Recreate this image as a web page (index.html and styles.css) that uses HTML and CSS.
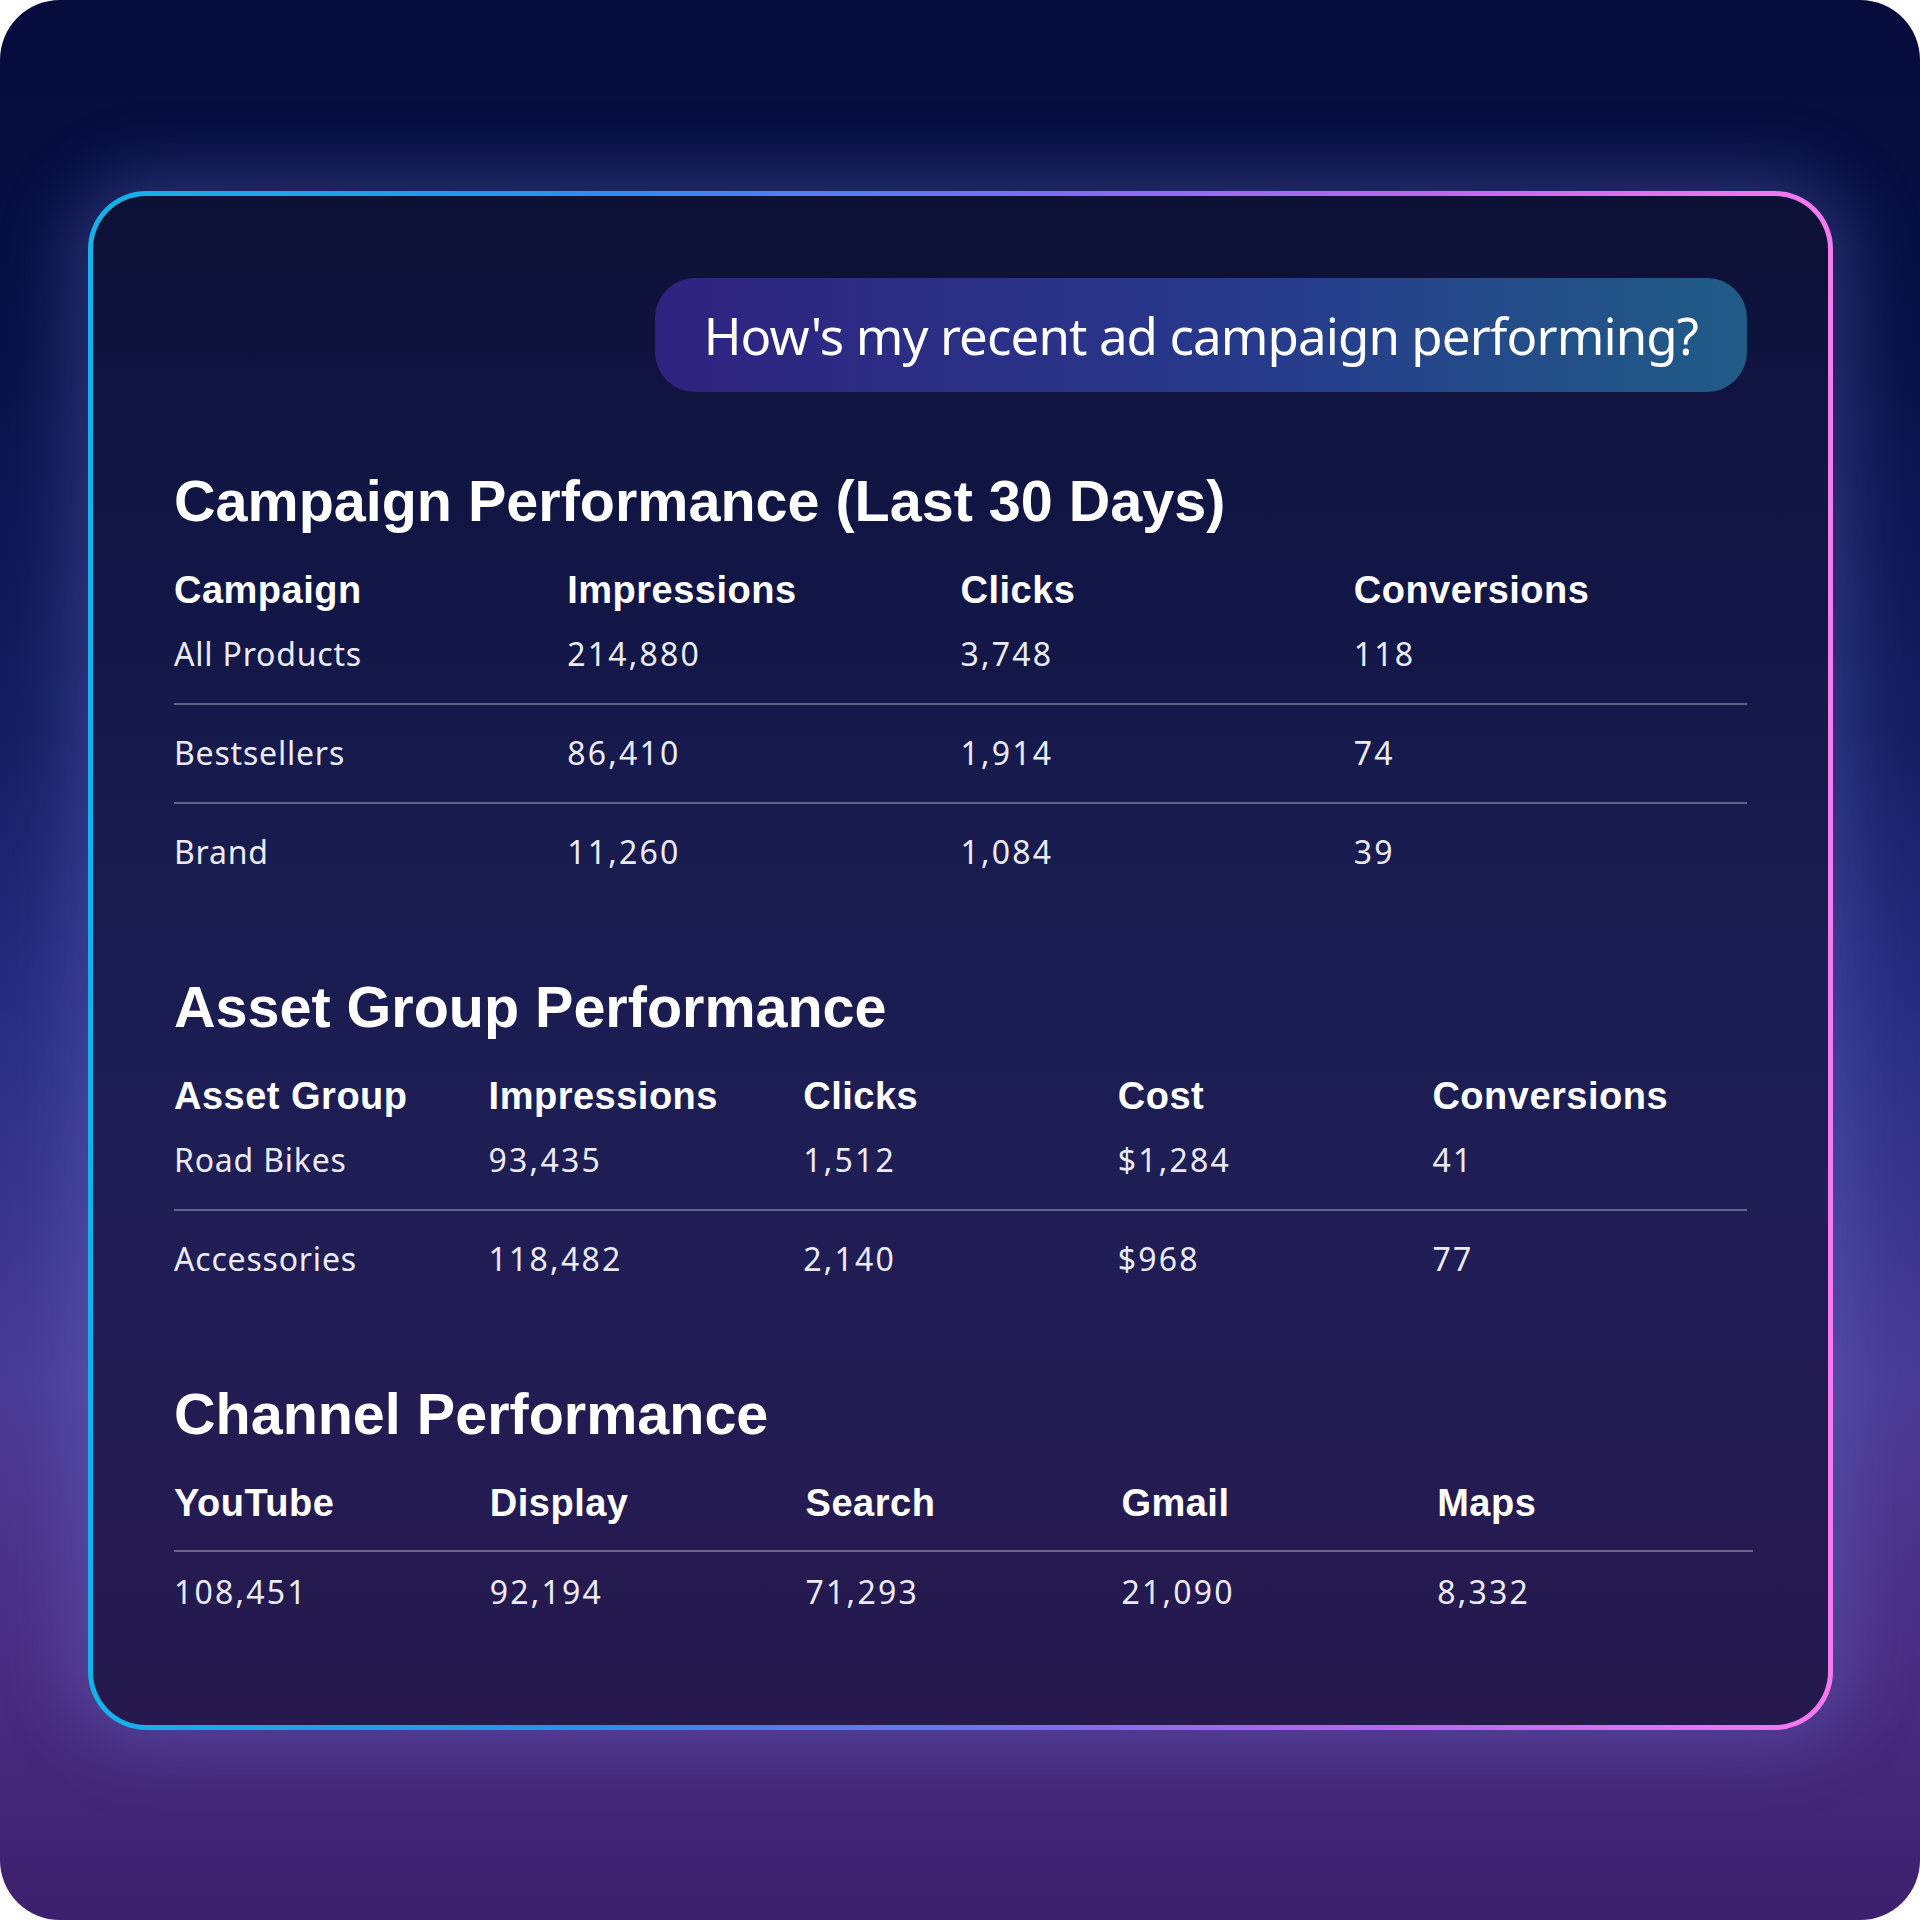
FILE: index.html
```html
<!DOCTYPE html>
<html lang="en">
<head>
<meta charset="utf-8">
<title>Campaign Performance</title>
<link rel="stylesheet" href="styles.css">
</head>
<body>
<div class="page">
  <div class="card">
    <div class="bubble">How's my recent ad campaign performing?</div>

    <section class="section first">
      <h2 class="title">Campaign Performance (Last 30 Days)</h2>
      <div class="table cols4">
        <div class="row head"><span>Campaign</span><span>Impressions</span><span>Clicks</span><span>Conversions</span></div>
        <div class="row data"><span>All Products</span><span class="num">214,880</span><span class="num">3,748</span><span class="num">118</span></div>
        <div class="row data"><span>Bestsellers</span><span class="num">86,410</span><span class="num">1,914</span><span class="num">74</span></div>
        <div class="row data last"><span>Brand</span><span class="num">11,260</span><span class="num">1,084</span><span class="num">39</span></div>
      </div>
    </section>

    <section class="section">
      <h2 class="title">Asset Group Performance</h2>
      <div class="table cols5">
        <div class="row head"><span>Asset Group</span><span>Impressions</span><span>Clicks</span><span>Cost</span><span>Conversions</span></div>
        <div class="row data"><span>Road Bikes</span><span class="num">93,435</span><span class="num">1,512</span><span class="num">$1,284</span><span class="num">41</span></div>
        <div class="row data last"><span>Accessories</span><span class="num">118,482</span><span class="num">2,140</span><span class="num">$968</span><span class="num">77</span></div>
      </div>
    </section>

    <section class="section">
      <h2 class="title">Channel Performance</h2>
      <div class="table cols5 channel">
        <div class="row head ruled"><span>YouTube</span><span>Display</span><span>Search</span><span>Gmail</span><span>Maps</span></div>
        <div class="row data last values"><span class="num">108,451</span><span class="num">92,194</span><span class="num">71,293</span><span class="num">21,090</span><span class="num">8,332</span></div>
      </div>
    </section>
  </div>
</div>
</body>
</html>
```

FILE: styles.css
```css
* { box-sizing: border-box; }

html, body {
  margin: 0;
  padding: 0;
  background: #ffffff;
}

.page {
  width: 1920px;
  height: 1920px;
  border-radius: 60px;
  overflow: hidden;
  padding-top: 191px;
  padding-left: 88px;
  background:
    radial-gradient(ellipse 1100px 900px at 50% 55%, rgba(70, 80, 170, 0.25), rgba(70, 80, 170, 0) 70%),
    linear-gradient(180deg, #050b3b 0%, #081247 18%, #151e62 38%, #2c2f86 55%, #4a3c95 72%, #4b2e84 86%, #3c206d 100%);
}

.card {
  width: 1745px;
  height: 1539px;
  border: 5px solid transparent;
  border-radius: 58px;
  padding: 82px 81px 0 81px;
  display: flex;
  flex-direction: column;
  background:
    linear-gradient(180deg, #0d1136 0%, #121646 25%, #181c4f 45%, #1f1e55 65%, #241b52 85%, #25194d 100%) padding-box,
    linear-gradient(90deg, #14b2e8 0%, #2f8cf0 30%, #7d6cf4 55%, #c266f2 78%, #f77bef 100%) border-box;
  box-shadow: 0 0 70px 14px rgba(110, 120, 210, 0.35);
}

.bubble {
  align-self: flex-end;
  height: 114px;
  line-height: 114px;
  padding: 0 49px 0 49px;
  border-radius: 40px;
  background: linear-gradient(90deg, #2f2380 0%, #273a8c 55%, #205c86 100%);
  color: #ffffff;
  font-family: "Noto Sans", "Open Sans", sans-serif;
  font-size: 51px;
  letter-spacing: -0.9px;
  white-space: nowrap;
}

.section {
  margin-top: 78px;
}

.section.first {
  margin-top: 81px;
}

.title {
  margin: 0;
  font-family: "Liberation Sans", Arial, sans-serif;
  font-weight: 700;
  font-size: 57.5px;
  line-height: 56px;
  color: #ffffff;
}

.table {
  margin-top: 43px;
}

.row {
  display: grid;
  grid-template-columns: repeat(4, 1fr);
}

.cols5 .row {
  grid-template-columns: repeat(5, 1fr);
}

.channel {
  margin-right: -6px;
}

.row.head {
  font-family: "Liberation Sans", Arial, sans-serif;
  font-weight: 700;
  font-size: 38px;
  line-height: 37px;
  color: #ffffff;
  letter-spacing: 0.5px;
}

.row.data {
  font-family: "Noto Sans", "Open Sans", sans-serif;
  font-size: 32px;
  line-height: 32px;
  color: #eceaf4;
  letter-spacing: 0.8px;
  padding: 32px 0 33px 0;
  border-bottom: 2px solid rgba(255, 255, 255, 0.32);
}

.row.data .num {
  letter-spacing: 2.2px;
}

.row.head + .row.data {
  padding-top: 29px;
}

.row.data.last {
  border-bottom: none;
}

.row.head.ruled {
  padding-bottom: 28px;
  border-bottom: 2px solid rgba(255, 255, 255, 0.32);
}

.row.head.ruled + .row.values {
  padding-top: 24px;
}
```
